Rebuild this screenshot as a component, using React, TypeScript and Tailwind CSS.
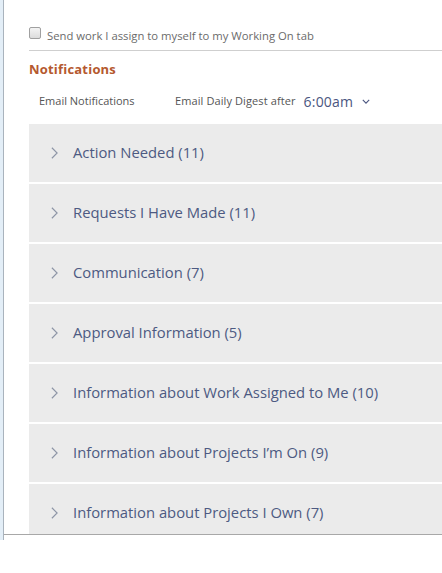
import React from 'react';

const groups = [
  'Action Needed (11)',
  'Requests I Have Made (11)',
  'Communication (7)',
  'Approval Information (5)',
  'Information about Work Assigned to Me (10)',
  'Information about Projects I\u2019m On (9)',
  'Information about Projects I Own (7)',
];

const Chevron = ({ className }: { className?: string }) => (
  <svg viewBox="0 0 10 16" className={className} fill="none" stroke="currentColor" strokeWidth="1.3">
    <path d="M2 2l6 6-6 6" />
  </svg>
);

export default function App() {
  return (
    <div className="w-[442px] h-[573px] bg-white overflow-hidden" style={{ fontFamily: '"Open Sans", "Liberation Sans", sans-serif' }}>
      <div className="flex h-[540px]">
        <div className="w-[3px] bg-[#e3eef7] shrink-0" />
        <div className="w-px bg-[#a9b3bd] shrink-0" />
        <div className="flex-1 h-[535px] overflow-hidden border-b border-[#a8a8a8]">
          <div className="pl-[25px]">
            <label className="flex items-end h-[51px] pb-[5px] border-b border-[#cfcfcf]">
              <span className="w-[12px] h-[12px] rounded-[2px] border border-[#a0a0a0] bg-gradient-to-b from-[#f4f4f4] to-[#dcdcdc] mr-[6px] mb-[6px]" />
              <span className="text-[11.3px] text-[#6b6b6b]">Send work I assign to myself to my Working On tab</span>
            </label>
            <div className="h-[37px] flex items-center text-[13px] font-bold text-[#b5592f] tracking-[0.2px]">Notifications</div>
            <div className="flex items-center h-[27px] text-[11px] text-[#555]">
              <span className="ml-[10px] w-[136px]">Email Notifications</span>
              <span className="tracking-[0.1px]">Email Daily Digest after</span>
              <span className="ml-[8px] text-[14px] text-[#4b5680] tracking-[0.2px]">6:00am</span>
              <svg viewBox="0 0 10 6" className="w-[8px] h-[5px] ml-[9px] text-[#4b5680]" fill="none" stroke="currentColor" strokeWidth="1.4">
                <path d="M1 1l4 4 4-4" />
              </svg>
            </div>
            <div className="mt-[9px] flex flex-col gap-[2px]">
              {groups.map((g) => (
                <div key={g} className="h-[58px] shrink-0 bg-[#ebebeb] flex items-center pb-[1px]">
                  <Chevron className="w-[9px] h-[14px] ml-[21px] mr-[14px] text-[#8d95a6]" />
                  <span className="text-[14.8px] text-[#4d5a82]">{g}</span>
                </div>
              ))}
            </div>
          </div>
        </div>
      </div>
    </div>
  );
}
